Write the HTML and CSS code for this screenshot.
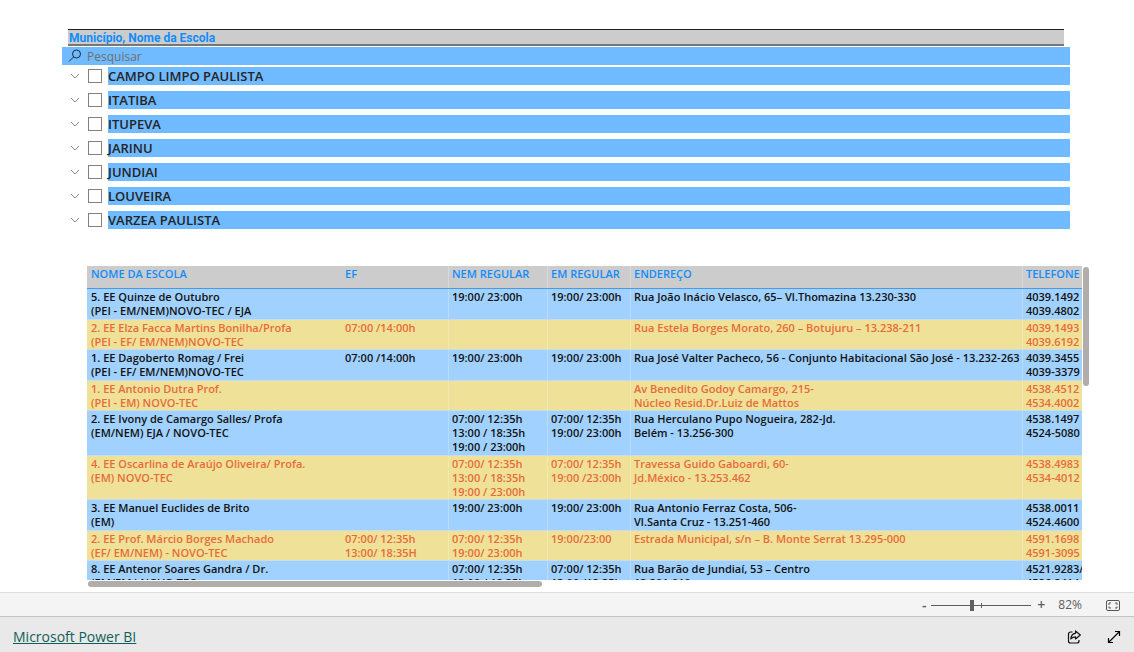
FILE: index.html
```html
<!DOCTYPE html>
<html lang="pt-BR">
<head>
<meta charset="utf-8">
<title>Microsoft Power BI</title>
<link rel="stylesheet" href="styles.css">
</head>
<body>
<svg class="defs" width="0" height="0" aria-hidden="true">
  <symbol id="chevron" viewBox="0 0 10 6"><path d="M1 1l4 4 4-4" fill="none" stroke="#888" stroke-width="1"/></symbol>
</svg>
<main class="report">
  <section class="slicer">
    <h2 class="slicer-title">Município, Nome da Escola</h2>
    <label class="search">
      <svg width="14" height="14" viewBox="0 0 14 14" aria-hidden="true"><circle cx="8.5" cy="5" r="4" fill="none" stroke="#222b38"/><path d="M5.5 8L1 12.5" stroke="#222b38" fill="none"/></svg>
      <input class="search-input" type="text" placeholder="Pesquisar" aria-label="Pesquisar">
    </label>
    <ul class="options">
      <li class="option"><button class="expand" aria-label="Expandir"><svg width="10" height="6"><use href="#chevron"/></svg></button><input class="check" type="checkbox" id="m1"><label class="option-name" for="m1">CAMPO LIMPO PAULISTA</label></li>
      <li class="option"><button class="expand" aria-label="Expandir"><svg width="10" height="6"><use href="#chevron"/></svg></button><input class="check" type="checkbox" id="m2"><label class="option-name" for="m2">ITATIBA</label></li>
      <li class="option"><button class="expand" aria-label="Expandir"><svg width="10" height="6"><use href="#chevron"/></svg></button><input class="check" type="checkbox" id="m3"><label class="option-name" for="m3">ITUPEVA</label></li>
      <li class="option"><button class="expand" aria-label="Expandir"><svg width="10" height="6"><use href="#chevron"/></svg></button><input class="check" type="checkbox" id="m4"><label class="option-name" for="m4">JARINU</label></li>
      <li class="option"><button class="expand" aria-label="Expandir"><svg width="10" height="6"><use href="#chevron"/></svg></button><input class="check" type="checkbox" id="m5"><label class="option-name" for="m5">JUNDIAI</label></li>
      <li class="option"><button class="expand" aria-label="Expandir"><svg width="10" height="6"><use href="#chevron"/></svg></button><input class="check" type="checkbox" id="m6"><label class="option-name" for="m6">LOUVEIRA</label></li>
      <li class="option"><button class="expand" aria-label="Expandir"><svg width="10" height="6"><use href="#chevron"/></svg></button><input class="check" type="checkbox" id="m7"><label class="option-name" for="m7">VARZEA PAULISTA</label></li>
    </ul>
  </section>
  <section class="grid">
    <div class="viewport">
      <table class="schools">
        <colgroup><col class="c-name"><col class="c-ef"><col class="c-nem"><col class="c-em"><col><col class="c-tel"></colgroup>
        <thead><tr><th>NOME DA ESCOLA</th><th>EF</th><th>NEM REGULAR</th><th>EM REGULAR</th><th>ENDEREÇO</th><th>TELEFONE</th></tr></thead>
        <tbody>
          <tr><td>5. EE Quinze de Outubro<br>(PEI - EM/NEM)NOVO-TEC / EJA</td><td></td><td>19:00/ 23:00h</td><td>19:00/ 23:00h</td><td>Rua João Inácio Velasco, 65– Vl.Thomazina 13.230-330</td><td>4039.1492<br>4039.4802</td></tr>
          <tr><td>2. EE Elza Facca Martins Bonilha/Profa<br>(PEI - EF/ EM/NEM)NOVO-TEC</td><td>07:00 /14:00h</td><td></td><td></td><td>Rua Estela Borges Morato, 260 – Botujuru – 13.238-211</td><td>4039.1493<br>4039.6192</td></tr>
          <tr><td>1. EE Dagoberto Romag / Frei<br>(PEI - EF/ EM/NEM)NOVO-TEC</td><td>07:00 /14:00h</td><td>19:00/ 23:00h</td><td>19:00/ 23:00h</td><td>Rua José Valter Pacheco, 56 - Conjunto Habitacional São José - 13.232-263</td><td>4039.3455<br>4039-3379</td></tr>
          <tr><td>1. EE Antonio Dutra Prof.<br>(PEI - EM) NOVO-TEC</td><td></td><td></td><td></td><td>Av Benedito Godoy Camargo, 215-<br>Núcleo Resid.Dr.Luiz de Mattos</td><td>4538.4512<br>4534.4002</td></tr>
          <tr><td>2. EE Ivony de Camargo Salles/ Profa<br>(EM/NEM) EJA / NOVO-TEC</td><td></td><td>07:00/ 12:35h<br>13:00 / 18:35h<br>19:00 / 23:00h</td><td>07:00/ 12:35h<br>19:00/ 23:00h</td><td>Rua Herculano Pupo Nogueira, 282-Jd.<br>Belém - 13.256-300</td><td>4538.1497<br>4524-5080</td></tr>
          <tr><td>4. EE Oscarlina de Araújo Oliveira/ Profa.<br>(EM) NOVO-TEC</td><td></td><td>07:00/ 12:35h<br>13:00 / 18:35h<br>19:00 / 23:00h</td><td>07:00/ 12:35h<br>19:00 /23:00h</td><td>Travessa Guido Gaboardi, 60-<br>Jd.México - 13.253.462</td><td>4538.4983<br>4534-4012</td></tr>
          <tr><td>3. EE Manuel Euclides de Brito<br>(EM)</td><td></td><td>19:00/ 23:00h</td><td>19:00/ 23:00h</td><td>Rua Antonio Ferraz Costa, 506-<br>Vl.Santa Cruz - 13.251-460</td><td>4538.0011<br>4524.4600</td></tr>
          <tr><td>2. EE Prof. Márcio Borges Machado<br>(EF/ EM/NEM) - NOVO-TEC</td><td>07:00/ 12:35h<br>13:00/ 18:35H</td><td>07:00/ 12:35h<br>19:00/ 23:00h</td><td>19:00/23:00</td><td>Estrada Municipal, s/n – B. Monte Serrat 13.295-000</td><td>4591.1698<br>4591-3095</td></tr>
          <tr><td>8. EE Antenor Soares Gandra / Dr.<br>(EM/EM ) NOVO-TEC</td><td></td><td>07:00/ 12:35h<br>13:00 / 18:35h</td><td>07:00/ 12:35h<br>13:00 /18:35h</td><td>Rua Barão de Jundiaí, 53 – Centro<br>13.201-010</td><td>4521.9283/<br>4586.2414</td></tr>
        </tbody>
      </table>
    </div>
    <div class="vbar"><div class="vthumb"></div></div>
    <div class="hbar"><div class="hthumb"></div></div>
  </section>
</main>
<div class="zoombar">
  <button class="step" aria-label="Diminuir zoom">-</button>
  <input class="range" type="range" min="0" max="100" value="40" aria-label="Zoom">
  <button class="step" aria-label="Aumentar zoom">+</button>
  <span class="percent">82%</span>
  <button class="icon" aria-label="Ajustar à página"><svg width="14" height="11" viewBox="0 0 14 11"><rect x=".5" y=".5" width="13" height="10" rx="1.5" fill="none" stroke="#555"/><path d="M5 3H3V5M9 3h2V5M3 6.500v1.500H5M11 6.500v1.500H9" fill="none" stroke="#555"/></svg></button>
</div>
<footer class="footer">
  <a class="brand" href="#">Microsoft Power BI</a>
  <button class="icon" aria-label="Compartilhar"><svg width="14" height="14" viewBox="0 0 14 14" fill="none" stroke="#111" stroke-width="1.2"><path d="M5.500 2H3.500a2 2 0 0 0-2 2V11a2 2 0 0 0 2 2h6.500a2 2 0 0 0 2-2v-1"/><path d="M8.500 1v2.300C5.500 3.500 4 5.500 3.800 9 5 7.500 6.500 6.800 8.500 6.800v2.200L13.300 5z" stroke-linejoin="round"/></svg></button>
  <button class="icon" aria-label="Tela inteira"><svg width="14" height="14" viewBox="0 0 14 14" fill="none" stroke="#000" stroke-width="1.200"><path d="M8 1.500h4.500V6M12.500 1.500l-11 11M1.500 8v4.500H6"/></svg></button>
</footer>
</body>
</html>
```
FILE: styles.css
```css
* { box-sizing: border-box; }
body {
  margin: 0;
  height: 100vh;
  display: flex;
  flex-direction: column;
  overflow: hidden;
  background: #fff;
  color: #252423;
  font-family: "Open Sans", "Noto Sans", sans-serif;
}
button { padding: 0; border: 0; background: none; color: inherit; font: inherit; }
svg { display: block; }
.defs { position: absolute; }
.report {
  flex: 1;
  min-height: 0;
  display: flex;
  flex-direction: column;
  gap: 37px;
  padding: 29px 45px 5px 62px;
}

.slicer { margin-right: 19px; }
.slicer-title {
  margin: 0 6px 1px;
  height: 17px;
  padding: 1px 0 0 1px;
  border-top: 1px solid #222;
  border-bottom: 2px solid #777;
  background: #ccc;
  color: #118dff;
  font: 700 12px/14px Roboto, sans-serif;
}
.search {
  display: flex;
  align-items: center;
  gap: 5px;
  height: 18px;
  padding-left: 6px;
  background: #70baff;
}
.search-input {
  flex: 1;
  height: 18px;
  padding: 1px 0 0;
  border: 0;
  outline: 0;
  background: none;
  font: 12px/17px "Open Sans", sans-serif;
}
.search-input::placeholder { color: #707070; opacity: 1; }
.options {
  list-style: none;
  margin: 2px 0 0;
  padding: 0;
  display: flex;
  flex-direction: column;
  gap: 6px;
}
.option { display: flex; align-items: center; height: 18px; padding-left: 8px; }
.expand { width: 10px; margin-right: 8px; }
.check {
  appearance: none;
  width: 14px;
  height: 14px;
  margin: 0 6px 0 0;
  border: 1px solid #858078;
  background: #fff;
}
.option-name {
  flex: 1;
  background: #70baff;
  font-size: 13px;
  font-weight: 600;
  line-height: 18px;
}

.grid {
  flex: 1;
  min-height: 0;
  margin-left: 25px;
  display: grid;
  grid-template-columns: 1fr 6px;
  grid-template-rows: 1fr 6px;
  row-gap: 1px;
  column-gap: 1px;
}
.viewport { min-height: 0; overflow: hidden; }
.schools {
  width: 100%;
  table-layout: fixed;
  border-collapse: separate;
  border-spacing: 0;
  color: #111;
  font-size: 11px;
  font-weight: 600;
  line-height: 14px;
}
.c-name { width: 254px; }
.c-ef { width: 107px; }
.c-nem { width: 99px; }
.c-em { width: 83px; }
.c-tel { width: 60px; }
.schools th {
  height: 23px;
  padding: 1px 0 1px 4px;
  border-bottom: 1px solid #4a98e8;
  background: #ccc;
  color: #118dff;
  font-weight: 600;
  text-align: left;
  vertical-align: top;
}
.schools td {
  padding: 1px 0 1px 4px;
  border-bottom: 1px solid #c8dcec;
  background: #a0d1ff;
  vertical-align: top;
  white-space: nowrap;
  overflow: hidden;
}
.schools tr:nth-child(even) td { padding-bottom: 0; background: #f0e199; color: #e66c37; }
.schools th:nth-child(n+3), .schools td:nth-child(n+3) { box-shadow: inset 1px 0 rgba(255, 255, 255, 0.25); }
.vthumb { height: 119px; margin-top: 1px; border-radius: 3px; background: #b0adab; }
.hthumb { height: 6px; width: 454px; max-width: 100%; margin-left: 1px; border-radius: 3px; background: #b0adab; }

.zoombar, .footer { display: flex; align-items: center; }
.zoombar {
  justify-content: flex-end;
  height: 24px;
  padding: 1px 14px 0 0;
  border-top: 1px solid #dcdcdc;
  background: #f4f4f4;
  color: #605e5c;
  font-size: 12px;
  line-height: 22px;
}
.step { width: 8px; font-size: 14px; font-weight: 600; }
.range {
  appearance: none;
  width: 100px;
  height: 12px;
  margin: 0 6px 0 3px;
  background:
    linear-gradient(#605e5c, #605e5c) 50px 50% / 1px 5px no-repeat,
    linear-gradient(#605e5c, #605e5c) 0 50% / 100% 1px no-repeat;
}
.range::-webkit-slider-thumb { appearance: none; width: 4px; height: 11px; background: #605e5c; }
.percent { margin: 0 24px 0 13px; }
.footer {
  height: 36px;
  padding: 4px 13px 0;
  border-top: 1px solid #c4c4c4;
  background: #e9e9e9;
  gap: 26px;
}
.brand { margin-right: auto; color: #0f5f58; font-size: 14px; line-height: 20px; }
```
